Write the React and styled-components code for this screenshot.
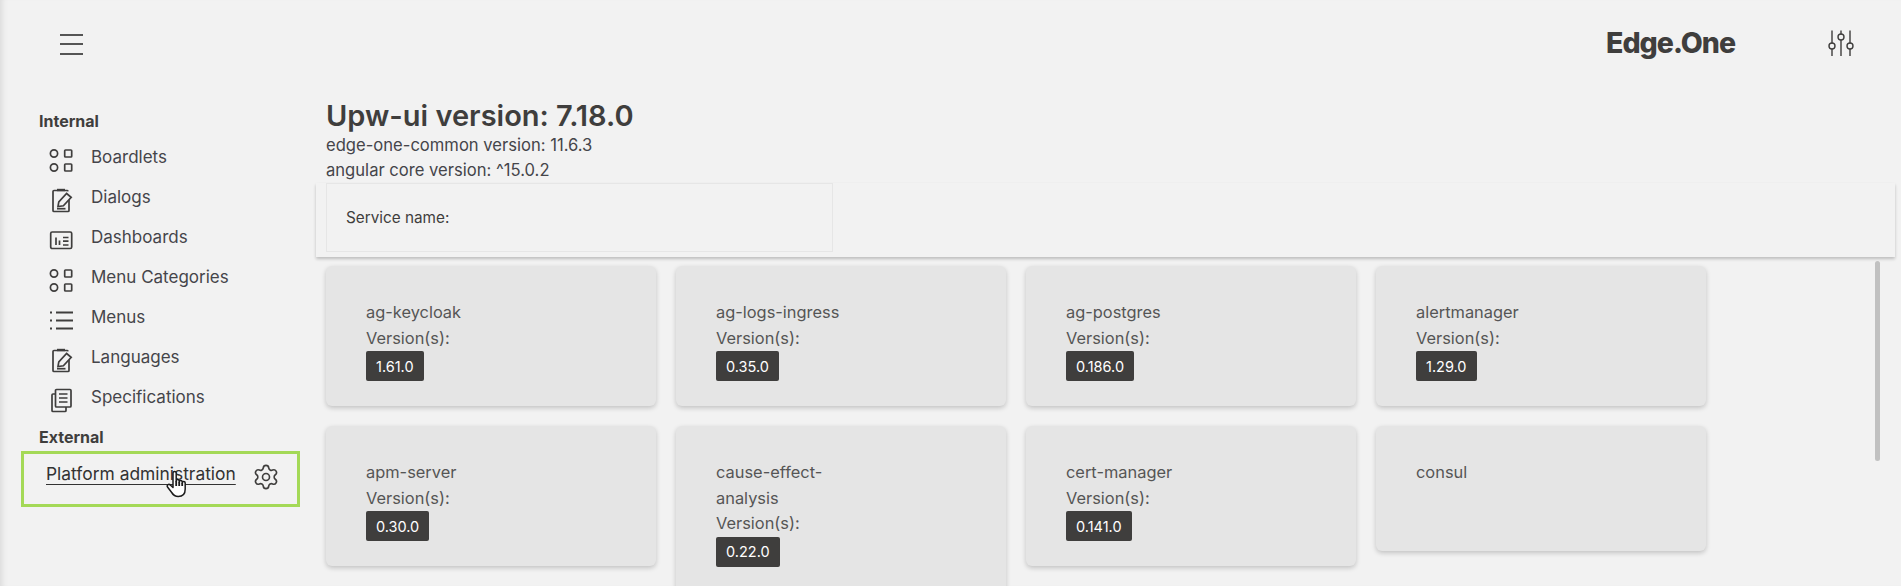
import React from "react";
import styled, { createGlobalStyle } from "styled-components";
import { Settings } from "lucide-react";

const GlobalStyle = createGlobalStyle`
  html, body {
    margin: 0;
    height: 100%;
    overflow: hidden;
    background: #f2f2f2;
    color: #3f3e3d;
    font-family: Inter, "Liberation Sans", sans-serif;
  }
`;

const internalLinks = [
  { label: "Boardlets", icon: "shapes" },
  { label: "Dialogs", icon: "note" },
  { label: "Dashboards", icon: "dash" },
  { label: "Menu Categories", icon: "shapes" },
  { label: "Menus", icon: "list" },
  { label: "Languages", icon: "note" },
  { label: "Specifications", icon: "files" },
];

const services = [
  { name: "ag-keycloak", version: "1.61.0" },
  { name: "ag-logs-ingress", version: "0.35.0" },
  { name: "ag-postgres", version: "0.186.0" },
  { name: "alertmanager", version: "1.29.0" },
  { name: "apm-server", version: "0.30.0" },
  { name: "cause-effect-analysis", version: "0.22.0" },
  { name: "cert-manager", version: "0.141.0" },
  { name: "consul" },
];

const NavIcon = ({ type }) => {
  const common = { width: 26, height: 26, viewBox: "0 0 26 26", fill: "none", stroke: "#3f3e3d", strokeWidth: 1.7 };
  if (type === "shapes") {
    return (
      <svg {...common}>
        <circle cx="6" cy="6.5" r="3.6" />
        <rect x="16.7" y="3" width="7" height="7" rx="0.8" />
        <circle cx="6" cy="20.5" r="3.6" />
        <rect x="16.7" y="17" width="7" height="7" rx="0.8" />
      </svg>
    );
  }
  if (type === "note") {
    return (
      <svg {...common}>
        <path d="M21 13v10.5a1 1 0 0 1-1 1H6a1 1 0 0 1-1-1V4.5a1 1 0 0 1 1-1h13a1 1 0 0 1 1 .8" />
        <path d="M9 3h8" strokeWidth="2.4" />
        <path d="M10 19.5l.8-4.7L18.6 6.5l4.6 3.9-7.8 8.4z" />
        <path d="M9 21.7h8.5" />
      </svg>
    );
  }
  if (type === "dash") {
    return (
      <svg {...common}>
        <rect x="2.7" y="5" width="21" height="16.5" rx="1.5" />
        <path d="M8 10.5v7.5M11.5 13.5v4.5M15 10.5h5.5M15 14.2h5.5M15 18h5.5" />
      </svg>
    );
  }
  if (type === "list") {
    return (
      <svg {...common}>
        <path d="M8 5.5h17M8 13.5h17M8 21.5h17" strokeWidth="1.8" />
        <path d="M2 5.5h2M2 13.5h2M2 21.5h2" strokeWidth="2" />
      </svg>
    );
  }
  return (
    <svg {...common}>
      <path d="M7.5 3.5a1 1 0 0 1 1-1h13.5a1 1 0 0 1 1 1V19a1 1 0 0 1-1 1H8.5a1 1 0 0 1-1-1z" />
      <path d="M7.5 7H5a1 1 0 0 0-1 1v15.5a1 1 0 0 0 1 1h12a1 1 0 0 0 1-1V20" />
      <path d="M11 7h8.5M11 11h8.5M11 15h8.5" />
    </svg>
  );
};

const App = () => (
  <>
    <GlobalStyle />
    <Page>
      <Header>
        <MenuButton>
          <span />
          <span />
          <span />
        </MenuButton>
        <Logo>Edge.One</Logo>
        <svg width="28" height="28" viewBox="0 0 28 28" fill="none" stroke="#3f3e3d" strokeWidth="1.4">
          <path d="M5 1.5v13M5 20v7M14 1.5v4M14 11v16M23 1.5v13M23 20v7" />
          <circle cx="5" cy="17" r="3" />
          <circle cx="14" cy="8" r="3" />
          <circle cx="23" cy="17" r="3" />
        </svg>
      </Header>
      <Body>
        <Sidebar>
          <SectionTitle>Internal</SectionTitle>
          {internalLinks.map((link) => (
            <NavItem key={link.label}>
              <IconSlot>
                <NavIcon type={link.icon} />
              </IconSlot>
              {link.label}
            </NavItem>
          ))}
          <SectionTitle $external>External</SectionTitle>
          <ExternalBox>
            <ExternalLink>Platform administration</ExternalLink>
            <Settings size={28} strokeWidth={1.4} color="#3f3e3d" />
            <HandCursor width="22" height="28" viewBox="0 0 22 28" fill="#fff" stroke="#1c1c1c" strokeWidth="1.5" strokeLinejoin="round">
              <path d="M7 3a1.6 1.6 0 0 1 3.2 0v8a1.5 1.5 0 0 1 3 0v1a1.5 1.5 0 0 1 3 0v1a1.5 1.5 0 0 1 3 0v6c0 4.5-2.5 7.5-7 7.5-3.5 0-5-1.5-6.5-4L1.5 17c-1-1.8 1.2-3.5 2.8-2L7 17.5z" />
              <path d="M10.2 11v5M13.2 12v4M16.2 13v3" strokeWidth="1.8" />
            </HandCursor>
          </ExternalBox>
        </Sidebar>
        <Main>
          <Title>Upw-ui version: 7.18.0</Title>
          <SubLine>edge-one-common version: 11.6.3</SubLine>
          <SubLine>angular core version: ^15.0.2</SubLine>
          <FilterBar>
            <FilterField>Service name:</FilterField>
          </FilterBar>
          <CardGrid>
            {services.map((service) => (
              <Card key={service.name}>
                <CardName>{service.name}</CardName>
                {service.version && (
                  <>
                    <CardName>Version(s):</CardName>
                    <Badge>{service.version}</Badge>
                  </>
                )}
              </Card>
            ))}
          </CardGrid>
          <ScrollThumb />
        </Main>
      </Body>
    </Page>
  </>
);

export default App;

const Page = styled.div`
  position: relative;
  height: 586px;
  overflow: hidden;
  box-shadow: inset 7px 0 6px -5px rgba(0, 0, 0, 0.1);
`;

const Header = styled.header`
  display: flex;
  align-items: center;
  height: 86px;
  padding: 0 46px 0 60px;

  svg {
    margin-left: 92px;
  }
`;

const MenuButton = styled.div`
  display: flex;
  flex-direction: column;
  justify-content: space-between;
  width: 23px;
  height: 21px;
  margin-top: 2px;

  span {
    height: 2px;
    background: #555;
  }
`;

const Logo = styled.div`
  margin-left: auto;
  margin-top: -2px;
  font-size: 28.5px;
  font-weight: 800;
  letter-spacing: -1px;
`;

const Body = styled.div`
  display: grid;
  grid-template-columns: 316px 1fr;
  padding-top: 2px;
`;

const Sidebar = styled.nav`
  padding: 21px 0 0 39px;
`;

const SectionTitle = styled.div`
  height: 25px;
  margin-top: ${({ $external }) => ($external ? "8px" : "0")};
  margin-bottom: 3px;
  line-height: 25px;
  font-size: 16px;
  font-weight: 700;
`;

const NavItem = styled.div`
  display: flex;
  align-items: center;
  height: 40px;
  font-size: 17px;
  color: #45454a;
`;

const IconSlot = styled.span`
  display: flex;
  justify-content: center;
  width: 26px;
  margin: 5px 17px 0 9px;

  svg {
    overflow: visible;
  }
`;

const ExternalBox = styled.div`
  position: relative;
  display: flex;
  align-items: center;
  gap: 16px;
  box-sizing: border-box;
  width: 279px;
  height: 56px;
  margin: -2px 0 0 -18px;
  padding: 0 0 0 22px;
  border: 3px solid #a4d957;

  > svg:first-of-type {
    margin-top: -4px;
  }
`;

const ExternalLink = styled.span`
  margin-top: -12px;
  font-size: 17.4px;
  color: #333;
  text-decoration: underline;
  text-underline-offset: 4px;
`;

const HandCursor = styled.svg`
  position: absolute;
  left: 142px;
  top: 16px;
`;

const Main = styled.main`
  position: relative;
  padding: 0 0 0 10px;
`;

const Title = styled.h1`
  margin: 11px 0 0;
  font-size: 29px;
  line-height: 34px;
  font-weight: 600;
`;

const SubLine = styled.div`
  font-size: 16.6px;
  line-height: 25px;
  color: #45454a;
`;

const FilterBar = styled.div`
  box-sizing: border-box;
  width: 1579px;
  height: 74px;
  margin-left: -10px;
  padding-left: 10px;
  box-shadow: 0 2px 3px rgba(0, 0, 0, 0.22);
`;

const FilterField = styled.div`
  box-sizing: border-box;
  display: flex;
  align-items: center;
  width: 507px;
  height: 69px;
  padding-left: 19px;
  border: 1px solid #e6e6e6;
  font-size: 15.3px;
`;

const CardGrid = styled.div`
  display: flex;
  flex-wrap: wrap;
  align-items: flex-start;
  gap: 20px;
  width: 1420px;
  margin-top: 9px;
`;

const Card = styled.div`
  box-sizing: border-box;
  display: flex;
  flex-direction: column;
  align-items: flex-start;
  width: 330px;
  min-height: 125px;
  padding: 34px 40px 25px;
  border-radius: 6px;
  background: #e5e5e5;
  box-shadow: 0 2px 5px rgba(0, 0, 0, 0.2);
`;

const CardName = styled.div`
  max-width: 140px;
  font-size: 16.4px;
  line-height: 25.5px;
  color: #555;
`;

const Badge = styled.span`
  display: flex;
  align-items: center;
  height: 30px;
  padding: 0 10px;
  border-radius: 2px;
  background: #3f3e3d;
  color: #fff;
  font-size: 14.5px;
`;

const ScrollThumb = styled.div`
  position: absolute;
  top: 173px;
  right: 21px;
  width: 5px;
  height: 200px;
  border-radius: 3px;
  background: #c1c1c1;
`;
